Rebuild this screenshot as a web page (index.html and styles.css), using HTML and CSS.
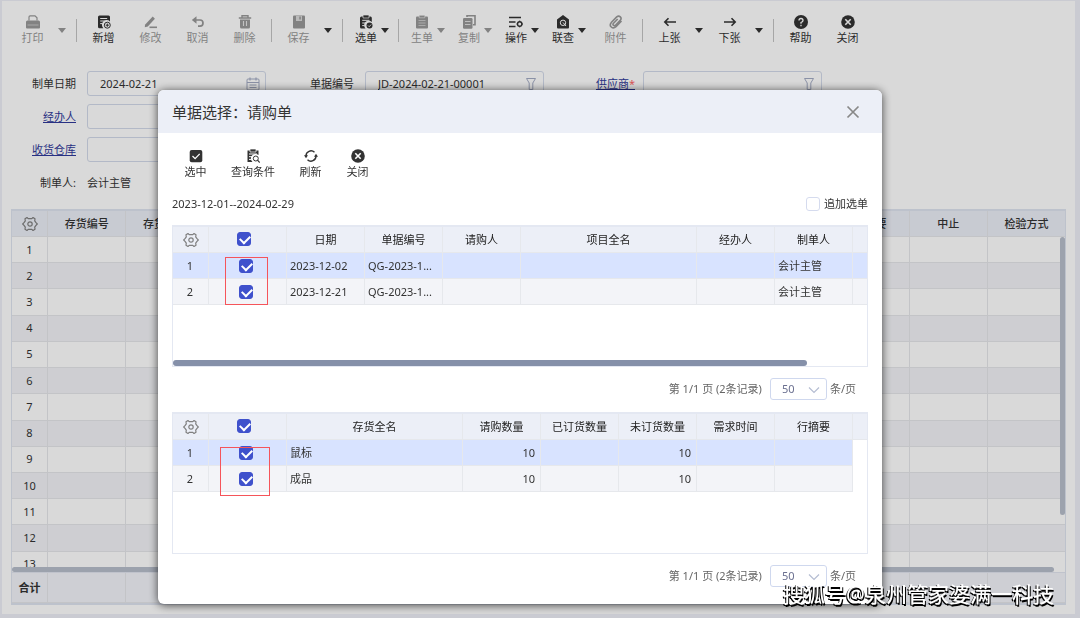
FILE: index.html
```html
<!DOCTYPE html>
<html lang="zh-CN">
<head>
<meta charset="utf-8">
<title>单据选择</title>
<link rel="stylesheet" href="styles.css">
</head>
<body>
<svg class="sprite" aria-hidden="true">
  <symbol id="i-print" viewBox="0 0 14 14"><path d="M3 5.500V2Q3 .8 4.200.8H9L11 2.800V5.500" fill="none" stroke="currentColor" stroke-width="1.200"/><path d="M1.500 5.500h11Q14 5.500 14 7v5.500Q14 13.500 13 13.500H1Q0 13.500 0 12.500V7Q0 5.500 1.500 5.500z" fill="currentColor"/><path d="M1.500 10h11" stroke="#fff" stroke-opacity=".6" stroke-width=".8"/></symbol>
  <symbol id="i-new" viewBox="0 0 14 14"><path d="M2.500.5h9Q13 .5 13 2v4.500A4.200 4.200 0 0 0 6.300 13.200H2.500Q1 13.200 1 11.700V2Q1 .5 2.500.5z" fill="currentColor"/><path d="M3.200 3.500h7M3.200 6h4.500M3.200 8.600h2.300" stroke="#fff" stroke-width="1"/><circle cx="10.300" cy="10.200" r="3" fill="none" stroke="currentColor"/><path d="M8.700 10.200h3.200M10.300 8.600v3.200" stroke="currentColor"/></symbol>
  <symbol id="i-edit" viewBox="0 0 14 14"><path d="M1 9.800 8.700 1.600 10.900 3.700 3.800 11.500.8 12.200z" fill="currentColor"/><path d="M5.500 12.300H13" stroke="currentColor" stroke-width="1.600"/></symbol>
  <symbol id="i-undo" viewBox="0 0 14 14"><path d="M.8 5 5.500 1.200V8.800z" fill="currentColor"/><path d="M4 5H9Q12 5 12 8T9 11.200H7" fill="none" stroke="currentColor" stroke-width="1.700"/></symbol>
  <symbol id="i-trash" viewBox="0 0 14 14"><path d="M4 2.500V.8h6v1.700M.8 3h12.400" fill="none" stroke="currentColor" stroke-width="1.400"/><path d="M2 4.500h10V12Q12 13.500 10.500 13.500h-7Q2 13.500 2 12z" fill="currentColor"/><path d="M5.500 6v5M8.500 6v5" stroke="#fff" stroke-opacity=".75" stroke-width="1.100"/></symbol>
  <symbol id="i-save" viewBox="0 0 14 14"><path d="M2 .5h10Q13 .5 13 1.500v11Q13 13.500 12 13.500H2Q1 13.500 1 12.500v-11Q1 .5 2 .5z" fill="currentColor"/><path d="M4 1h6v5H4z" fill="#fff" fill-opacity=".65"/><path d="M7.300 1.500h1.500v3H7.300z" fill="currentColor"/></symbol>
  <symbol id="i-pick" viewBox="0 0 14 14"><path d="M2.500 1.500h9Q12.800 1.500 12.800 3v4A4 4 0 0 0 6.500 13.500h-4Q1 13.500 1 12V3Q1 1.500 2.500 1.500z" fill="currentColor"/><path d="M4 0h6v3H4z" fill="currentColor" stroke="#fff" stroke-width=".7"/><path d="M3.200 5.300h7.300M3.200 8h3.500M3.200 10.600h2.300" stroke="#fff"/><circle cx="10.500" cy="10.500" r="3" fill="currentColor"/><path d="m9 10.500 1.200 1.200 2-2.200" fill="none" stroke="#fff" stroke-width=".8"/></symbol>
  <symbol id="i-clip" viewBox="0 0 14 14"><path d="M2 1.500h10Q13 1.500 13 2.500v10Q13 13.500 12 13.500H2Q1 13.500 1 12.500v-10Q1 1.500 2 1.500z" fill="currentColor"/><path d="M4.200.3h5.600v2.500H4.200z" fill="currentColor" stroke="#fff" stroke-opacity=".7" stroke-width=".7"/><path d="M3.500 5.500h7M3.500 8h7M3.500 10.500h7" stroke="#fff" stroke-opacity=".6" stroke-width=".8"/></symbol>
  <symbol id="i-copy" viewBox="0 0 14 14"><path d="M5 2V.8h8v9h-2" fill="none" stroke="currentColor" stroke-width="1.600"/><rect x="1" y="3" width="9.500" height="10.700" rx="1.200" fill="currentColor"/><path d="M3 6.500h5.500M3 9.500h5.500" stroke="#fff" stroke-opacity=".7"/></symbol>
  <symbol id="i-ops" viewBox="0 0 14 14"><path d="M0 2.500h12M0 7h6.500M0 11.500h6.500" stroke="currentColor" stroke-width="1.500"/><circle cx="10.700" cy="9" r="2.200" fill="none" stroke="currentColor" stroke-width="1.400"/><path d="M10.700 5.600v1.200M10.700 11.200v1.200M13 9h1M7.500 9h1" stroke="currentColor"/></symbol>
  <symbol id="i-link" viewBox="0 0 14 14"><path d="M7 0 13 4.500V12.500Q13 13.500 12 13.500H2Q1 13.500 1 12.500V4.500z" fill="currentColor"/><circle cx="7" cy="7.800" r="2.700" fill="none" stroke="#fff"/><path d="m7 7.500 3 3.500" stroke="#fff"/></symbol>
  <symbol id="i-attach" viewBox="0 0 14 14"><path d="M12.500 6 7 11.700Q4.500 14 2.300 12T2.500 7.200L7.700 1.900Q9.700.3 11.300 1.900T11.200 5.400L6.500 10.200Q5.300 11.200 4.400 10.300T4.500 8.200L8.700 4" fill="none" stroke="currentColor" stroke-width="1.600"/></symbol>
  <symbol id="i-left" viewBox="0 0 14 14"><path d="M13 7H2M5.500 3.300 1.800 7l3.700 3.700" fill="none" stroke="currentColor" stroke-width="1.600"/></symbol>
  <symbol id="i-right" viewBox="0 0 14 14"><path d="M1 7h11M8.500 3.300 12.200 7l-3.700 3.700" fill="none" stroke="currentColor" stroke-width="1.600"/></symbol>
  <symbol id="i-help" viewBox="0 0 14 14"><circle cx="7" cy="7" r="7" fill="currentColor"/><path d="M5 5.500Q5 3.500 7 3.500T9 5.400Q9 6.500 7 7.500v1.200M7 9.800v1.400" fill="none" stroke="#fff" stroke-width="1.300"/></symbol>
  <symbol id="i-close" viewBox="0 0 14 14"><circle cx="7" cy="7" r="6.800" fill="currentColor"/><path d="m4.300 4.300 5.400 5.400M9.700 4.300 4.300 9.700" stroke="#fff" stroke-width="1.600"/></symbol>
  <symbol id="i-select" viewBox="0 0 14 14"><rect x=".7" y="1" width="12.600" height="12.300" rx="2" fill="currentColor"/><path d="m3.500 7 2.600 2.600 4.600-4.700" fill="none" stroke="#fff" stroke-width="1.300"/></symbol>
  <symbol id="i-query" viewBox="0 0 14 14"><path d="M1.500 1.500h11V6A4 4 0 0 0 6.500 13h-5z" fill="currentColor"/><path d="M4 0h6v3H4z" fill="currentColor" stroke="#fff" stroke-width=".7"/><path d="M3 5h8M3 7.700h3.500M3 10.400h2.500" stroke="#fff"/><circle cx="9.800" cy="9.500" r="2.500" fill="#fff" stroke="currentColor"/><path d="m11.500 11.200 2.200 2.300" stroke="currentColor" stroke-width="1.200"/></symbol>
  <symbol id="i-refresh" viewBox="0 0 14 14"><path d="M2 7A5 5 0 0 1 10.500 3.300M12 7A5 5 0 0 1 3.500 10.700" fill="none" stroke="currentColor" stroke-width="1.400"/><path d="M0 6.300h4L2 9.200zM10 7.700h4L12 4.800z" fill="currentColor"/></symbol>
  <symbol id="i-gear" viewBox="0 0 16 16"><path d="M5 1.500 6.200 2.600H9.800L11 1.500 13 2.800 12.700 4.800 14 6.700 15.300 8 14 9.300 12.700 11.200 13 13.200 11 14.500 9.800 13.400H6.200L5 14.500 3 13.200 3.300 11.200 2 9.300.7 8 2 6.700 3.300 4.800 3 2.800z" fill="none" stroke="currentColor" stroke-width="1.200" stroke-linejoin="round"/><circle cx="8" cy="8" r="2.200" fill="none" stroke="currentColor" stroke-width="1.200"/></symbol>
  <symbol id="i-calendar" viewBox="0 0 14 14"><rect x="1" y="2" width="12" height="11" rx="1" fill="none" stroke="currentColor"/><path d="M1 5.500h12M4 .5v3M10 .5v3M3.500 8h7M3.500 10.500h7" stroke="currentColor" stroke-width="1.200"/></symbol>
  <symbol id="i-funnel" viewBox="0 0 14 14"><path d="M2.500 1.500h9L8.800 6v6.500H5.200V6z" fill="none" stroke="currentColor" stroke-linejoin="round"/></symbol>
  <symbol id="i-x" viewBox="0 0 14 14"><path d="m1.500 1.500 11 11M12.500 1.500l-11 11" stroke="currentColor" stroke-width="1.700"/></symbol>
  <symbol id="i-chevron" viewBox="0 0 12 8"><path d="m1 1.500 5 5 5-5" fill="none" stroke="currentColor" stroke-width="1.200"/></symbol>
</svg>

<main class="page">
  <div class="toolbar">
    <div class="tools tools--split">
      <button class="tool" disabled><svg><use href="#i-print"/></svg>打印</button><button class="caret" disabled aria-label="打印选项"></button>
    </div>
    <span class="sep"></span>
    <div class="tools">
      <button class="tool"><svg><use href="#i-new"/></svg>新增</button>
      <button class="tool" disabled><svg><use href="#i-edit"/></svg>修改</button>
      <button class="tool" disabled><svg><use href="#i-undo"/></svg>取消</button>
      <button class="tool" disabled><svg><use href="#i-trash"/></svg>删除</button>
    </div>
    <span class="sep"></span>
    <div class="tools tools--split">
      <button class="tool" disabled><svg><use href="#i-save"/></svg>保存</button><button class="caret" aria-label="保存选项"></button>
    </div>
    <span class="sep"></span>
    <div class="tools tools--menus">
      <button class="tool tool--menu"><svg><use href="#i-pick"/></svg>选单</button>
    </div>
    <span class="sep"></span>
    <div class="tools tools--menus">
      <button class="tool tool--menu" disabled><svg><use href="#i-clip"/></svg>生单</button>
      <button class="tool tool--menu" disabled><svg><use href="#i-copy"/></svg>复制</button>
      <button class="tool tool--menu"><svg><use href="#i-ops"/></svg>操作</button>
      <button class="tool tool--menu"><svg><use href="#i-link"/></svg>联查</button>
    </div>
    <div class="tools">
      <button class="tool" disabled><svg><use href="#i-attach"/></svg>附件</button>
    </div>
    <span class="sep"></span>
    <div class="tools tools--split">
      <button class="tool"><svg><use href="#i-left"/></svg>上张</button><button class="caret" aria-label="上张选项"></button>
      <button class="tool"><svg><use href="#i-right"/></svg>下张</button><button class="caret" aria-label="下张选项"></button>
    </div>
    <span class="sep"></span>
    <div class="tools">
      <button class="tool"><svg><use href="#i-help"/></svg>帮助</button>
      <button class="tool"><svg><use href="#i-close"/></svg>关闭</button>
    </div>
  </div>

  <form class="form">
    <div class="field"><label for="f-date">制单日期</label><span class="box"><input id="f-date" type="text" value="2024-02-21"><svg><use href="#i-calendar"/></svg></span></div>
    <div class="field"><label for="f-no">单据编号</label><span class="box"><input id="f-no" type="text" value="JD-2024-02-21-00001"><svg><use href="#i-funnel"/></svg></span></div>
    <div class="field field--required"><label for="f-sup" class="link">供应商<span class="star">*</span></label><span class="box"><input id="f-sup" type="text"><svg><use href="#i-funnel"/></svg></span></div>
    <div class="field field--first"><label for="f-agent" class="link">经办人</label><span class="box"><input id="f-agent" type="text"></span></div>
    <div class="field field--first"><label for="f-store" class="link">收货仓库</label><span class="box"><input id="f-store" type="text"></span></div>
    <div class="field field--first"><label for="f-maker">制单人:</label><output id="f-maker">会计主管</output></div>
  </form>

  <section class="sheet">
    <div class="sheet-view">
      <table class="sheet-table sheet-table--body">
        <colgroup><col class="c-num"><col span="12"><col class="c-last"></colgroup>
        <thead><tr><th><svg class="gear"><use href="#i-gear"/></svg></th><th>存货编号</th><th>存货全名</th><th></th><th></th><th></th><th></th><th></th><th></th><th></th><th></th><th>行摘要</th><th>中止</th><th>检验方式</th></tr></thead>
        <tbody>
          <tr><td>1</td><td></td><td></td><td></td><td></td><td></td><td></td><td></td><td></td><td></td><td></td><td></td><td></td><td></td></tr>
          <tr><td>2</td><td></td><td></td><td></td><td></td><td></td><td></td><td></td><td></td><td></td><td></td><td></td><td></td><td></td></tr>
          <tr><td>3</td><td></td><td></td><td></td><td></td><td></td><td></td><td></td><td></td><td></td><td></td><td></td><td></td><td></td></tr>
          <tr><td>4</td><td></td><td></td><td></td><td></td><td></td><td></td><td></td><td></td><td></td><td></td><td></td><td></td><td></td></tr>
          <tr><td>5</td><td></td><td></td><td></td><td></td><td></td><td></td><td></td><td></td><td></td><td></td><td></td><td></td><td></td></tr>
          <tr><td>6</td><td></td><td></td><td></td><td></td><td></td><td></td><td></td><td></td><td></td><td></td><td></td><td></td><td></td></tr>
          <tr><td>7</td><td></td><td></td><td></td><td></td><td></td><td></td><td></td><td></td><td></td><td></td><td></td><td></td><td></td></tr>
          <tr><td>8</td><td></td><td></td><td></td><td></td><td></td><td></td><td></td><td></td><td></td><td></td><td></td><td></td><td></td></tr>
          <tr><td>9</td><td></td><td></td><td></td><td></td><td></td><td></td><td></td><td></td><td></td><td></td><td></td><td></td><td></td></tr>
          <tr><td>10</td><td></td><td></td><td></td><td></td><td></td><td></td><td></td><td></td><td></td><td></td><td></td><td></td><td></td></tr>
          <tr><td>11</td><td></td><td></td><td></td><td></td><td></td><td></td><td></td><td></td><td></td><td></td><td></td><td></td><td></td></tr>
          <tr><td>12</td><td></td><td></td><td></td><td></td><td></td><td></td><td></td><td></td><td></td><td></td><td></td><td></td><td></td></tr>
          <tr><td>13</td><td></td><td></td><td></td><td></td><td></td><td></td><td></td><td></td><td></td><td></td><td></td><td></td><td></td></tr>
        </tbody>
      </table>
      <span class="thumb thumb--y"></span>
      <span class="thumb thumb--x"></span>
    </div>
    <table class="sheet-table sheet-table--total">
      <colgroup><col class="c-num"><col span="12"><col class="c-last"></colgroup>
      <tbody><tr><th>合计</th><td></td><td></td><td></td><td></td><td></td><td></td><td></td><td></td><td></td><td></td><td></td><td></td><td></td></tr></tbody>
    </table>
  </section>
</main>

<div class="overlay">
  <div class="dialog" role="dialog" aria-labelledby="dlg-title">
    <header class="dialog-head">
      <h1 id="dlg-title">单据选择：请购单</h1>
      <button class="dialog-close" aria-label="关闭"><svg><use href="#i-x"/></svg></button>
    </header>
    <div class="dialog-body">
      <div class="dialog-tools">
        <button class="tool"><svg><use href="#i-select"/></svg>选中</button>
        <button class="tool"><svg><use href="#i-query"/></svg>查询条件</button>
        <button class="tool"><svg><use href="#i-refresh"/></svg>刷新</button>
        <button class="tool"><svg><use href="#i-close"/></svg>关闭</button>
      </div>
      <div class="range">
        <span>2023-12-01--2024-02-29</span>
        <label class="append"><input type="checkbox" class="check">追加选单</label>
      </div>

      <div class="list">
        <table class="list-table">
          <colgroup><col class="w-num"><col class="w-std"><col class="w-std"><col class="w-std"><col class="w-std"><col><col class="w-std"><col class="w-std"><col class="w-end"></colgroup>
          <thead><tr><th><svg class="gear"><use href="#i-gear"/></svg></th><th class="pick"><input type="checkbox" class="check" checked aria-label="全选"></th><th>日期</th><th>单据编号</th><th>请购人</th><th>项目全名</th><th>经办人</th><th>制单人</th><th></th></tr></thead>
          <tbody>
            <tr class="on"><td class="num">1</td><td class="pick"><input type="checkbox" class="check" checked aria-label="第1行"></td><td>2023-12-02</td><td>QG-2023-1...</td><td></td><td></td><td></td><td>会计主管</td><td></td></tr>
            <tr><td class="num">2</td><td class="pick"><input type="checkbox" class="check" checked aria-label="第2行"></td><td>2023-12-21</td><td>QG-2023-1...</td><td></td><td></td><td></td><td>会计主管</td><td></td></tr>
          </tbody>
        </table>
        <span class="mark mark--top"></span>
        <span class="list-thumb"></span>
      </div>
      <div class="pager">
        <span>第 1/1 页 (2条记录)</span>
        <span class="size"><select id="size-1" aria-label="每页条数"><option>50</option></select><svg><use href="#i-chevron"/></svg></span>
        <label for="size-1">条/页</label>
      </div>

      <div class="list">
        <table class="list-table">
          <colgroup><col class="w-num"><col class="w-std"><col><col class="w-std"><col class="w-std"><col class="w-std"><col class="w-std"><col class="w-std"><col class="w-end"></colgroup>
          <thead><tr><th><svg class="gear"><use href="#i-gear"/></svg></th><th class="pick"><input type="checkbox" class="check" checked aria-label="全选"></th><th>存货全名</th><th>请购数量</th><th>已订货数量</th><th>未订货数量</th><th>需求时间</th><th>行摘要</th><th></th></tr></thead>
          <tbody>
            <tr class="on"><td class="num">1</td><td class="pick"><input type="checkbox" class="check" checked aria-label="第1行"></td><td>鼠标</td><td class="qty">10</td><td></td><td class="qty">10</td><td></td><td></td><td class="blank"></td></tr>
            <tr><td class="num">2</td><td class="pick"><input type="checkbox" class="check" checked aria-label="第2行"></td><td>成品</td><td class="qty">10</td><td></td><td class="qty">10</td><td></td><td></td><td class="blank"></td></tr>
          </tbody>
        </table>
        <span class="mark mark--bottom"></span>
      </div>
      <div class="pager">
        <span>第 1/1 页 (2条记录)</span>
        <span class="size"><select id="size-2" aria-label="每页条数"><option>50</option></select><svg><use href="#i-chevron"/></svg></span>
        <label for="size-2">条/页</label>
      </div>
    </div>
  </div>
</div>
<div class="watermark">搜狐号@泉州管家婆满一科技</div>
</body>
</html>
```

FILE: styles.css
```css
* { box-sizing: border-box; }

body,
button,
input,
select {
  font: 11px/16px "Noto Sans", "Noto Sans CJK SC", sans-serif;
  color: #333;
}

body {
  margin: 0;
  padding: 1px 5px 4px 2px;
  height: 100vh;
  overflow: hidden;
  background: #eeeff7;
}

button {
  margin: 0;
  padding: 0;
  border: 0;
  background: none;
}

h1 { margin: 0; }
table { border-collapse: separate; border-spacing: 0; table-layout: fixed; width: 100%; }
.sprite { position: absolute; width: 0; height: 0; }

.page {
  display: flex;
  flex-direction: column;
  height: 100%;
  padding: 0 9px 9px;
  background: #fff;
}

/* Toolbar */
.toolbar {
  display: flex;
  align-items: flex-start;
  height: 70px;
  margin-left: -2px;
  padding-top: 14px;
}

.tools { display: flex; }
.tools--split { padding-right: 4px; }
.tools--menus { padding-right: 2px; }

.tool {
  display: flex;
  flex-direction: column;
  align-items: center;
  min-width: 47px;
  color: #333;
}

.tool svg { width: 14px; height: 14px; margin-bottom: 1px; }
.tool:disabled { color: #999; }

.tool--menu { position: relative; padding-right: 7px; }

.caret { display: flex; width: 13px; padding: 13px 0 0 2px; }

.caret::after,
.tool--menu::after {
  content: "";
  border: 4px solid transparent;
  border-top: 5px solid #333;
  border-bottom: 0;
}

.tool--menu::after { position: absolute; top: 13px; left: 35px; }
.caret:disabled::after,
.tool--menu:disabled::after { border-top-color: #999; }

.sep {
  width: 1px;
  height: 23px;
  margin: 4px 3px 0;
  background: #c4c4c4;
}

/* Form */
.form {
  display: grid;
  grid-template-columns: repeat(3, 264px);
  grid-auto-rows: 25px;
  gap: 8px 14px;
  margin-left: -9px;
  height: 138px;
}

.field { display: flex; align-items: center; }
.field--first { grid-column: 1; }
.field label { width: 85px; padding-right: 11px; text-align: right; }
.field--required label { padding-right: 8px; }
.field .link { color: #30399a; text-decoration: underline; }
.star { color: #f66; }

.box { position: relative; flex: 1; }

.box input {
  width: 100%;
  height: 25px;
  padding: 0 24px 0 12px;
  border: 1px solid #d3daea;
  border-radius: 3px;
  background: #fff;
}

.box svg {
  position: absolute;
  top: 6px;
  right: 6px;
  width: 14px;
  height: 14px;
  color: #a3abc4;
}

/* Order sheet */
.sheet {
  display: flex;
  flex: 1;
  flex-direction: column;
  min-height: 0;
  border: 1px solid #dfe4f0;
  border-top: 2px solid #dfe4f0;
  border-bottom-width: 2px;
}

.sheet-view { position: relative; flex: 1; min-height: 0; overflow: hidden; }
.c-num { width: 36px; }
.c-last { width: 77px; }
.sheet-table--body { height: 367px; }

.sheet-table th,
.sheet-table td {
  padding: 0;
  border-right: 1px solid #e6e7ea;
  border-bottom: 1px solid #e6e7ea;
  text-align: center;
}

.sheet-table th { font-weight: 500; white-space: nowrap; }
.sheet-table thead th { height: 26px; background: #eceff7; }
.sheet-table tbody tr:nth-child(even) { background: #f2f3f7; }
.sheet-table tr > :last-child { border-right: 0; }

.sheet-table--total { height: 31px; background: #f2f4f9; border-top: 1px solid #e2e6f0; }
.sheet-table--total th { font-weight: 700; }

.gear { display: block; width: 16px; height: 16px; margin: 0 auto; color: #808080; }

.thumb { position: absolute; border-radius: 3px; background: #b8bfcc; }
.thumb--x { right: 11px; bottom: 0; left: 0; height: 5px; }
.thumb--y { top: 26px; right: 0; width: 5px; height: 278px; }

/* Dialog */
.overlay {
  position: fixed;
  inset: 0;
  display: flex;
  padding: 90px 198px 14px 158px;
  background: rgba(0, 0, 0, .15);
}

.dialog {
  flex: 1;
  min-width: 0;
  overflow: hidden;
  border-radius: 6px;
  background: #fff;
  box-shadow: 0 1px 10px rgba(0, 0, 0, .7);
}

.dialog-head {
  display: flex;
  align-items: center;
  justify-content: space-between;
  height: 43px;
  padding: 0 22px 0 14px;
  background: #eceff7;
}

.dialog-head h1 { font-size: 15px; line-height: 20px; font-weight: 400; }
.dialog-close { display: flex; color: #888; }
.dialog-close svg { width: 14px; height: 14px; }
.dialog-body { padding: 16px 14px 0; }
.dialog-tools { display: flex; }
.dialog-tools .tool { padding: 0 12px; }

.range {
  display: flex;
  align-items: center;
  justify-content: space-between;
  height: 45px;
  padding-top: 2px;
}

.append { display: flex; align-items: center; gap: 4px; }

.check {
  appearance: none;
  position: relative;
  display: block;
  width: 14px;
  height: 14px;
  margin: 0 auto;
  border: 1px solid #d5dbee;
  border-radius: 3px;
  background: #fff;
}

.check:checked { border-color: #3f51cc; background: #3f51cc; }

.check:checked::after {
  content: "";
  position: absolute;
  top: 2px;
  left: 2px;
  width: 8px;
  height: 5px;
  border: solid #fff;
  border-width: 0 0 2px 2px;
  transform: rotate(-45deg);
}

.list {
  position: relative;
  height: 142px;
  border: 1px solid #e4e8f2;
  border-top-width: 2px;
}

.w-num { width: 36px; }
.w-std { width: 78px; }
.w-end { width: 14px; }

.list-table th,
.list-table td {
  height: 26px;
  padding: 0 4px 0 3px;
  border-right: 1px solid #e6e8ec;
  border-bottom: 1px solid #e6e8ec;
  font-weight: 400;
  text-align: left;
  white-space: nowrap;
}

.list-table th { padding: 0; background: #eceff7; color: #222; text-align: center; }
.list-table tbody tr { background: #f3f4f8; }
.list-table tbody .on { background: #d8e3ff; }
.list-table .num { text-align: center; }
.list-table .qty { padding-right: 5px; text-align: right; }
.list-table tr > :last-child { border-right: 0; }
.list-table .blank { border-bottom: 0; background: #fff; }
.list-table th.pick { padding: 0 7px 2px 0; }
.list-table td.pick { padding: 0 3px 0 0; }

.mark { position: absolute; border: 1px solid #f5545a; pointer-events: none; }
.mark--top { top: 30px; left: 52px; width: 43px; height: 48px; }
.mark--bottom { top: 33px; left: 47px; width: 50px; height: 49px; }

.list-thumb {
  position: absolute;
  right: 60px;
  bottom: 0;
  left: 0;
  height: 6px;
  border-radius: 3px;
  background: #8590a9;
}

.pager {
  display: flex;
  align-items: center;
  justify-content: flex-end;
  height: 45px;
  padding: 0 12px 2px 0;
  color: #666;
}

.size { position: relative; margin: 0 3px 0 8px; }

.size select {
  appearance: none;
  display: block;
  width: 57px;
  height: 22px;
  padding: 0 20px 0 11px;
  border: 1px solid #cfd8ee;
  border-radius: 3px;
  background: #fff;
  color: #6b7090;
}

.size svg {
  position: absolute;
  top: 8px;
  right: 7px;
  width: 12px;
  height: 8px;
  color: #b5bdd2;
  pointer-events: none;
}

.watermark {
  position: fixed;
  right: 26px;
  bottom: 9px;
  color: #fff;
  font-size: 21px;
  line-height: 30px;
  font-weight: 500;
  text-shadow: -1px 1px 0 #000, 1px 2px 0 #000;
}
```
